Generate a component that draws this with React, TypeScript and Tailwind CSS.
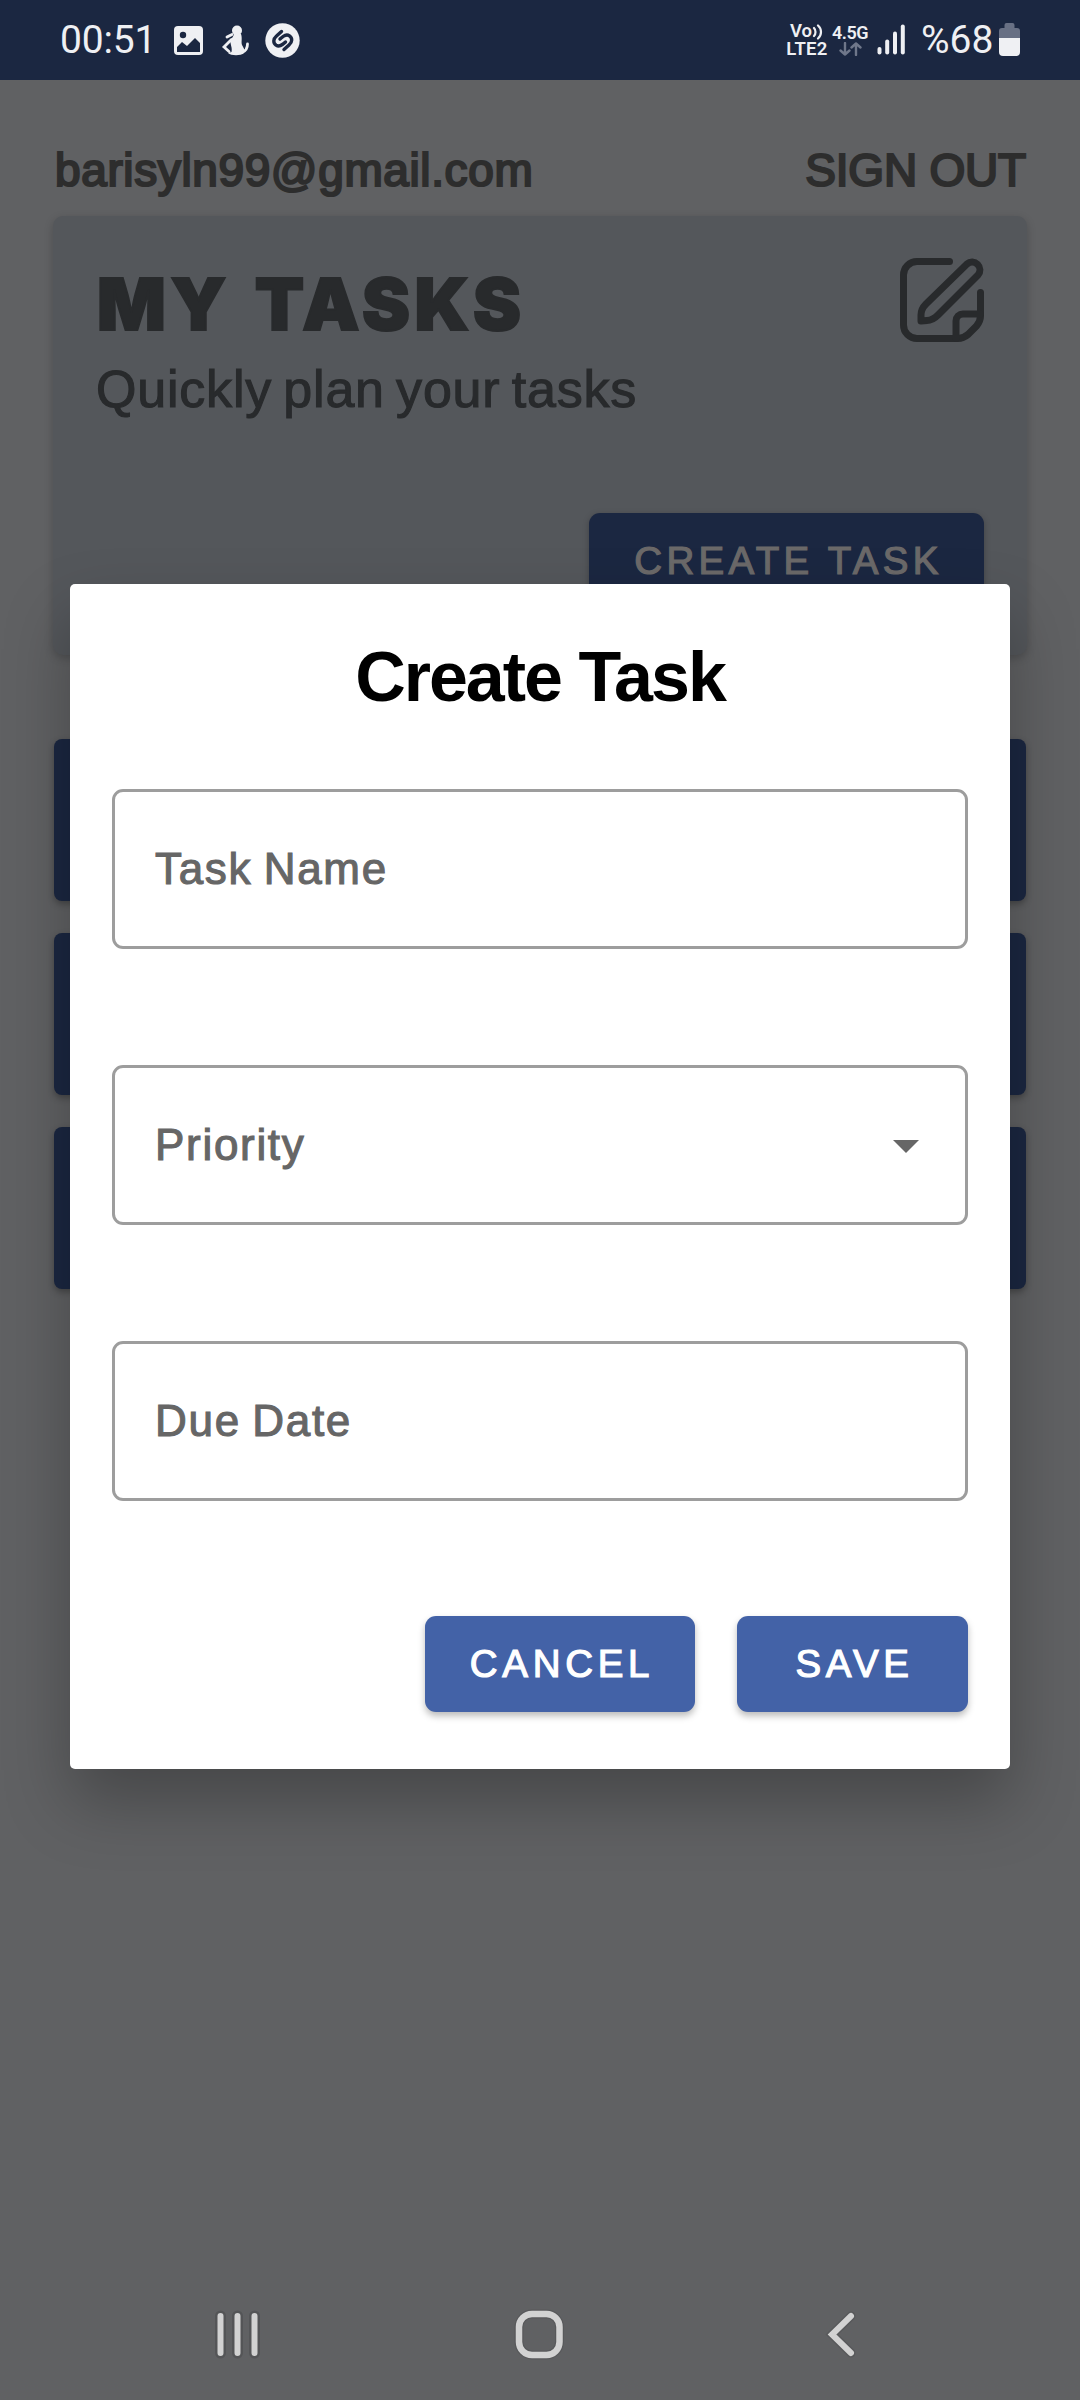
import React from "react";

function StatusBar() {
  return (
    <header className="flex h-20 items-start bg-[#1b2741] text-[#eff0f3] font-['Roboto',sans-serif]">
      <div className="mt-[18px] ml-[60px] w-[114px] text-[39px] leading-[44px] tracking-[-0.2px]">00:51</div>
      <svg className="mt-[20px] h-[40px] w-[126px]" viewBox="174 20 126 40" fill="none">
        <rect x="174" y="26" width="29" height="29" rx="4" fill="#eff0f3" />
        <circle cx="183" cy="35" r="3.2" fill="#1b2741" />
        <path d="M177 52v-5l5-5 5 4 8-8 5 5v9z" fill="#1b2741" />
        <circle cx="237" cy="30.500" r="5" fill="#eff0f3" />
        <path d="M232 34.500l-5 2.500M231.500 39.500l-7.500 7.500 5 4.500M242 52.500c4-1.500 5.500-4 5.500-8.500" stroke="#eff0f3" strokeWidth="2.800" strokeLinecap="round" />
        <path d="M234 34h7c1.500 4 0 8 1 11 2 4 3.500 5 2 8-3 3-13 3-16 0l3.500-1c1-4-1-7-1-10 0-3 3-5 3.500-8z" fill="#eff0f3" />
        <circle cx="282.500" cy="40.500" r="17.200" fill="#eff0f3" />
        <path d="M281.500 31.500l-5 4.500c-3.500 3-3.500 7-.5 9.200 3 2 5.500.5 9.500-3.200M284 49.500l5-4.500c3.500-3 3.500-7 .5-9.200-3-2-5.500-.5-9.500 3.200" stroke="#1b2741" strokeWidth="3.400" strokeLinecap="round" />
      </svg>
      <div className="mt-[23px] ml-[487px] flex w-[40px] flex-col items-center text-[18.500px] font-semibold leading-[17.500px]">
        <span className="flex items-center">
          Vo
          <svg className="h-4 w-3" viewBox="0 0 12 16" fill="none" stroke="#eff0f3" strokeWidth="2.200" strokeLinecap="round">
            <path d="M2 4c2 2 2 6 0 8M6 1.500c4 3.500 4 9.500 0 13" />
          </svg>
        </span>
        <span className="tracking-[0.3px]">LTE2</span>
      </div>
      <div className="mt-[23px] ml-[6px] flex w-[34px] flex-col items-center">
        <span className="text-[18px] font-semibold leading-[19px] tracking-[-0.5px]">4.5G</span>
        <svg className="h-[14px] w-[23px]" viewBox="0 0 23 14" fill="none" stroke="#6f778a" strokeWidth="2.400" strokeLinecap="round" strokeLinejoin="round">
          <path d="M6 1v11.500M1.500 8.500l4.500 4 4.500-4M17 13V1.500M12.500 5.500l4.500-4 4.500 4" />
        </svg>
      </div>
      <svg className="mt-[24px] ml-[10px] h-[31px] w-[28px]" viewBox="0 0 28 31" fill="#eff0f3">
        <rect x="0.500" y="23" width="4" height="7.500" rx="2" />
        <rect x="8.200" y="15.500" width="4" height="15" rx="2" />
        <rect x="16" y="7.500" width="4" height="23" rx="2" />
        <rect x="23.800" y="0.500" width="4" height="30" rx="2" />
      </svg>
      <div className="mt-[18px] ml-[16px] w-[78px] text-[39px] leading-[44px] whitespace-nowrap">%68</div>
      <svg className="mt-[23px] h-[33px] w-[21px]" viewBox="0 0 21 33">
        <path d="M5.500 5V2a2 2 0 0 1 2-2h6a2 2 0 0 1 2 2v3H18a3 3 0 0 1 3 3v7H0V8a3 3 0 0 1 3-3z" fill="#687084" />
        <path d="M0 15h21v14a4 4 0 0 1-4 4H4a4 4 0 0 1-4-4z" fill="#eff0f3" />
      </svg>
    </header>
  );
}

function NoteIcon() {
  return (
    <svg className="h-[84px] w-[84px]" viewBox="0 0 84 84" fill="none" stroke="#282a2c" strokeWidth="7" strokeLinecap="round" strokeLinejoin="round">
      <path d="M49.500 3.500H17A13.500 13.500 0 0 0 3.500 17v50A13.500 13.500 0 0 0 17 80.500h41c4 0 7-1.500 10-4l8.500-8.500c2.500-3 4-6 4-10V34.500" />
      <path d="M80 56H63a7 7 0 0 0-7 7v17" />
      <path d="M21 63v-6c0-5 2-8 5-11L67 6a7.800 7.800 0 0 1 11 11L38 57c-3 3-6 5.500-11 5.500z" />
    </svg>
  );
}

function Field({ label, select = false }: { label: string; select?: boolean }) {
  return (
    <div className="flex h-[160px] items-center justify-between rounded-[11px] border-[3px] border-[#9d9d9d] pr-[46px] pl-[40px] text-[44px] leading-[50px] tracking-[1.7px] [word-spacing:-2.5px] text-[#666666] [-webkit-text-stroke:1.1px_#666666]">
      <span>{label}</span>
      {select && (
        <svg className="mt-[2px] h-[13px] w-[26px]" viewBox="0 0 26 13" fill="#666666">
          <path d="M0 0h26L13 13z" />
        </svg>
      )}
    </div>
  );
}

const buttonText = "text-[38.5px] leading-[44px] whitespace-nowrap";

function Dialog() {
  return (
    <section className="absolute top-[584px] left-[70px] flex h-[1185px] w-[940px] flex-col rounded-[5px] bg-white px-[42px] shadow-[0_33px_66px_rgba(0,0,0,0.27)]">
      <h2 className="mt-[54px] h-[78px] text-center text-[70px] font-bold leading-[78px] tracking-[-2px] text-black">Create Task</h2>
      <div className="mt-[73px] flex flex-col gap-[116px]">
        <Field label="Task Name" />
        <Field label="Priority" select />
        <Field label="Due Date" />
      </div>
      <div className="mt-[115px] flex justify-end gap-[42px] text-white [-webkit-text-stroke:1.2px_white]">
        <button className="flex h-24 w-[270px] items-center justify-center rounded-[11px] bg-[#4362a7] pl-1 tracking-[4.7px] shadow-[0_4px_7px_rgba(0,0,0,0.27)]">
          <span className={buttonText}>CANCEL</span>
        </button>
        <button className="flex h-24 w-[231px] items-center justify-center rounded-[11px] bg-[#4362a7] pl-1 tracking-[4.5px] shadow-[0_4px_7px_rgba(0,0,0,0.27)]">
          <span className={buttonText}>SAVE</span>
        </button>
      </div>
    </section>
  );
}

function NavBar() {
  return (
    <nav className="absolute top-[2306px] left-0 flex h-[58px] w-full items-center">
      <svg className="ml-[214px] h-[58px] w-[48px]" viewBox="0 0 48 58" fill="none" strokeLinecap="round">
        <path d="M6.500 10v37M23.500 10v37M40.500 10v37" stroke="#545557" strokeWidth="11" />
        <path d="M6.500 10v37M23.500 10v37M40.500 10v37" stroke="#d2d2d2" strokeWidth="6" />
      </svg>
      <svg className="ml-[249px] h-[58px] w-[58px]" viewBox="0 0 58 58" fill="none">
        <rect x="8" y="8" width="40.500" height="41" rx="13" stroke="#58595b" strokeWidth="9" />
        <rect x="8" y="8" width="40.500" height="41" rx="13" stroke="#d2d2d2" strokeWidth="6.500" />
      </svg>
      <svg className="ml-[256px] h-[58px] w-[40px]" viewBox="0 0 40 58" fill="none" strokeLinecap="round">
        <path d="M26 10L7 28.500 26 47" stroke="#58595b" strokeWidth="9" />
        <path d="M26 10L7 28.500 26 47" stroke="#d2d2d2" strokeWidth="6" />
      </svg>
    </nav>
  );
}

export default function App() {
  return (
    <div className="relative h-[2400px] w-[1080px] overflow-hidden bg-[#606163] font-['Liberation_Sans',Arial,sans-serif]">
      <StatusBar />
      <main>
        <div className="flex h-[136px] justify-between pt-[64px] pr-[54px] pl-[55px] text-[46px] leading-[52px] text-[#2d2d2d] [-webkit-text-stroke:2.2px_#2d2d2d]">
          <span className="tracking-[0.62px]">barisyln99@gmail.com</span>
          <span className="tracking-[-0.2px]">SIGN OUT</span>
        </div>
        <section className="mx-[53px] flex h-[439px] flex-col rounded-[10px] bg-[#54575b] px-[43px] text-[#282a2c] shadow-[0_3px_10px_rgba(0,0,0,0.2)]">
          <div className="flex justify-between pt-[42px]">
            <div>
              <h1 className="mt-1 ml-[1px] text-[72px] font-black leading-[84px] tracking-[4.6px] [word-spacing:5px] [-webkit-text-stroke:2px_#282a2c] font-['Inter',sans-serif]">MY TASKS</h1>
              <p className="mt-[13px] text-[52px] leading-[60px] tracking-[0.8px] [word-spacing:-4px] [-webkit-text-stroke:1.1px_#282a2c]">Quickly plan your tasks</p>
            </div>
            <NoteIcon />
          </div>
          <button className="mt-auto mb-[46px] flex h-24 w-[395px] items-center justify-center self-end rounded-[11px] bg-[#1b2741] pl-1 tracking-[4.3px] text-[#6b6969] shadow-[0_2px_6px_rgba(0,0,0,0.25)] [-webkit-text-stroke:1.2px_#6b6969]">
            <span className={buttonText}>CREATE TASK</span>
          </button>
        </section>
        <div className="mx-[54px] mt-[84px] flex flex-col gap-8">
          {[0, 1, 2].map((task) => (
            <div key={task} className="h-[162px] rounded-[8px] bg-[#1b2741] shadow-[0_3px_7px_rgba(0,0,0,0.3)]" />
          ))}
        </div>
      </main>
      <Dialog />
      <NavBar />
    </div>
  );
}
